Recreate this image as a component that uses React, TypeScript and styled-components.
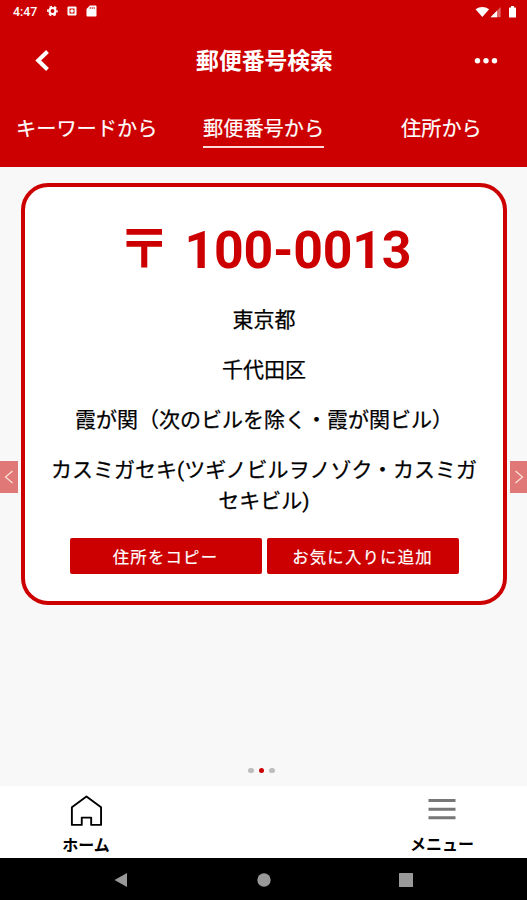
import React from "react";
import styled, { createGlobalStyle } from "styled-components";

const RED = "#cc0000";

const GlobalStyle = createGlobalStyle`
  body { margin: 0; }
  * { box-sizing: border-box; }
  button { border: 0; padding: 0; margin: 0; background: none; color: inherit; font: inherit; }
`;

const Screen = styled.div`
  width: 527px;
  height: 900px;
  display: flex;
  flex-direction: column;
  overflow: hidden;
  background: #f8f8f8;
  color: #000;
  font-family: Roboto, "Noto Sans CJK JP", sans-serif;
`;

const Header = styled.header`
  height: 167px;
  flex: none;
  background: ${RED};
  color: #fff;
`;

const StatusBar = styled.div`
  height: 22px;
  padding: 0 10px 0 13px;
  display: flex;
  align-items: center;
  font-size: 12.4px;
  font-weight: 500;
`;

const StatusIcons = styled.div`
  display: flex;
  align-items: center;
  margin-left: 10px;
  gap: 9px;
`;

const SignalIcons = styled.div`
  display: flex;
  align-items: center;
  margin-left: auto;
`;

const TitleBar = styled.div`
  height: 76px;
  display: grid;
  grid-template-columns: 84px 1fr 84px;
  align-items: center;
  justify-items: center;
`;

const Title = styled.h1`
  margin: 3px 0 0 2px;
  font-size: 22.8px;
  line-height: 34px;
  font-weight: 700;
`;

const IconButton = styled.button`
  display: flex;
`;

const Tabs = styled.nav`
  display: grid;
  grid-template-columns: 187px 198px 1fr;
  justify-items: start;
  padding: 15px 0 0 16px;
`;

const Tab = styled.button<{ $active?: boolean }>`
  && {
    height: 35px;
    padding-bottom: 1px;
    font-size: 20.2px;
    line-height: 32px;
    white-space: nowrap;
    -webkit-text-stroke: 0.2px;
    border-bottom: 2px solid ${(p) => (p.$active ? "#ffdcdc" : "transparent")};
  }
`;

const Carousel = styled.main`
  height: 619px;
  flex: none;
  display: flex;
  flex-direction: column;
`;

const Slide = styled.div`
  display: flex;
  justify-content: space-between;
  align-items: flex-start;
  padding-top: 16px;
`;

const Arrow = styled.button<{ $side: "left" | "right" }>`
  width: ${(p) => (p.$side === "left" ? 18 : 17)}px;
  height: 32px;
  margin-top: 278px;
  display: flex;
  align-items: center;
  justify-content: center;
  background: #e07878;
`;

const Card = styled.article`
  width: 486px;
  height: 422px;
  border: 4px solid ${RED};
  border-radius: 27px;
  background: #fff;
  display: flex;
  flex-direction: column;
  align-items: center;
  padding-top: 31px;
`;

const PostalCode = styled.h2`
  margin: 0 0 21px 1px;
  height: 66px;
  display: flex;
  align-items: center;
  gap: 14px;
  color: ${RED};
  font-size: 51.8px;
  letter-spacing: -0.2px;
  line-height: 66px;
  font-weight: 700;
`;

const PostalMark = styled.span`
  font-size: 53px;
  margin-top: -3px;
`;

const AddressLine = styled.p`
  margin: 0 0 19px;
  font-size: 21px;
  line-height: 31px;
  text-align: center;
  white-space: pre;
  -webkit-text-stroke: 0.25px;
`;

const Actions = styled.div`
  display: flex;
  gap: 5px;
  margin-top: 2px;
`;

const ActionButton = styled.button`
  && {
    width: 192px;
    height: 36px;
    padding-top: 3px;
    border-radius: 2px;
    background: ${RED};
    color: #fff;
    font-size: 16.4px;
    letter-spacing: 1.2px;
    line-height: 33px;
    -webkit-text-stroke: 0.2px;
  }
`;

const Dots = styled.div`
  display: flex;
  justify-content: center;
  gap: 5px;
  margin-top: auto;
  padding-bottom: 13px;
  margin-right: 4px;
`;

const Dot = styled.span<{ $active?: boolean }>`
  width: 5.5px;
  height: 5.5px;
  border-radius: 50%;
  background: ${(p) => (p.$active ? RED : "#bdbdbd")};
`;

const BottomBar = styled.nav`
  height: 72px;
  flex: none;
  display: flex;
  justify-content: space-between;
  padding: 0 49px 0 50px;
  background: #fff;
`;

const BottomItem = styled.button<{ $gap: number }>`
  && {
    width: 72px;
    display: flex;
    flex-direction: column;
    align-items: center;
    padding-top: 9px;
    gap: ${(p) => p.$gap}px;
    font-size: 16px;
    font-weight: 700;
    line-height: 24px;
    white-space: nowrap;
  }
`;

const SystemBar = styled.footer`
  height: 42px;
  flex: none;
  display: flex;
  align-items: center;
  justify-content: space-between;
  padding: 1px 114px 0 114px;
  background: #000;
`;

export default function App() {
  return (
    <>
      <GlobalStyle />
      <Screen>
        <Header>
          <StatusBar>
            4:47
            <StatusIcons>
              <svg width="11" height="12" viewBox="0 0 11 12" fill="none" stroke="#fff">
                <circle cx="5.5" cy="6" r="3" strokeWidth="2.2" />
                <circle cx="5.5" cy="6" r="4.6" strokeWidth="1.6" strokeDasharray="2.6 2.217" strokeDashoffset="1.3" />
              </svg>
              <svg width="10" height="10" viewBox="0 0 10 10">
                <rect x="0.5" y="0.5" width="9" height="9" rx="1" fill="#fff" />
                <path d="M2.5 2.5h5v5h-5z" fill={RED} />
                <circle cx="5" cy="5" r="1.8" fill="#fff" />
              </svg>
              <svg width="11" height="12" viewBox="0 0 11 12">
                <path d="M4 .5h5.6q.9 0 .9.9v9.2q0 .9-.9.9H1.4q-.9 0-.9-.9V4z" fill="#fff" />
                <path d="M4.2 2v2M6.2 2v2M8.2 2v2" stroke={RED} strokeWidth=".8" />
              </svg>
            </StatusIcons>
            <SignalIcons>
              <svg width="42" height="17" viewBox="0 0 42 17" fill="#fff">
                <path d="M.5 6.200Q7.300 1.600 14.200 6.200L7.300 14z" />
                <path d="M15.500 14.300L25.600 4V14.300z" opacity=".4" />
                <path d="M15.500 14.300L22 7.700V14.300z" />
                <path d="M34.500 4.400h1.500V3h3v1.400h1.500q.5 0 .5.5v9q0 .5-.5.5h-6q-.5 0-.5-.5v-9q0-.5.5-.5z" />
              </svg>
            </SignalIcons>
          </StatusBar>
          <TitleBar>
            <IconButton aria-label="戻る">
              <svg width="16" height="22" viewBox="0 0 16 22" fill="none" stroke="#fff" strokeWidth="4">
                <path d="M13.500 2.500L4.200 11.500L13.500 20.500" />
              </svg>
            </IconButton>
            <Title>郵便番号検索</Title>
            <IconButton aria-label="その他">
              <svg width="26" height="8" viewBox="0 0 26 8" fill="#fff">
                <circle cx="5.500" cy="4.800" r="2.700" />
                <circle cx="14" cy="4.800" r="2.700" />
                <circle cx="22.500" cy="4.800" r="2.700" />
              </svg>
            </IconButton>
          </TitleBar>
          <Tabs>
            <Tab>キーワードから</Tab>
            <Tab $active>郵便番号から</Tab>
            <Tab>住所から</Tab>
          </Tabs>
        </Header>
        <Carousel>
          <Slide>
            <Arrow $side="left" aria-label="前へ">
              <svg width="10" height="14" viewBox="0 0 10 14" fill="none" stroke="#ffe3d8" strokeWidth="1.200">
                <path d="M8.500 1L1.500 7L8.500 13" />
              </svg>
            </Arrow>
            <Card>
              <PostalCode>
                <PostalMark>〒</PostalMark>
                <span>100-0013</span>
              </PostalCode>
              <AddressLine>東京都</AddressLine>
              <AddressLine>千代田区</AddressLine>
              <AddressLine>霞が関（次のビルを除く・霞が関ビル）</AddressLine>
              <AddressLine>{"カスミガセキ(ツギノビルヲノゾク・カスミガ\nセキビル)"}</AddressLine>
              <Actions>
                <ActionButton>住所をコピー</ActionButton>
                <ActionButton>お気に入りに追加</ActionButton>
              </Actions>
            </Card>
            <Arrow $side="right" aria-label="次へ">
              <svg width="10" height="14" viewBox="0 0 10 14" fill="none" stroke="#ffe3d8" strokeWidth="1.200">
                <path d="M1.500 1L8.500 7L1.500 13" />
              </svg>
            </Arrow>
          </Slide>
          <Dots>
            <Dot />
            <Dot $active />
            <Dot />
          </Dots>
        </Carousel>
        <BottomBar>
          <BottomItem $gap={7}>
            <svg width="34" height="34" viewBox="0 0 34 34" fill="none" stroke="#000" strokeWidth="2">
              <path d="M17.500 1.500L33 13V31.800H22.500V24H12.500V31.800H2V13z" strokeLinejoin="round" />
            </svg>
            ホーム
          </BottomItem>
          <BottomItem $gap={4}>
            <svg width="28" height="34" viewBox="0 0 28 34" stroke="#777" strokeWidth="3">
              <path d="M.5 5.500H27.500M.5 14.200H27.500M.5 22.800H27.500" />
            </svg>
            メニュー
          </BottomItem>
        </BottomBar>
        <SystemBar>
          <svg width="14" height="16" viewBox="0 0 14 16" fill="#999">
            <path d="M.5 8L13 1V15z" />
          </svg>
          <svg width="14" height="14" viewBox="0 0 14 14" fill="#999">
            <circle cx="7" cy="7" r="6.700" />
          </svg>
          <svg width="14" height="14" viewBox="0 0 14 14" fill="#999">
            <rect width="14" height="14" rx=".5" />
          </svg>
        </SystemBar>
      </Screen>
    </>
  );
}
